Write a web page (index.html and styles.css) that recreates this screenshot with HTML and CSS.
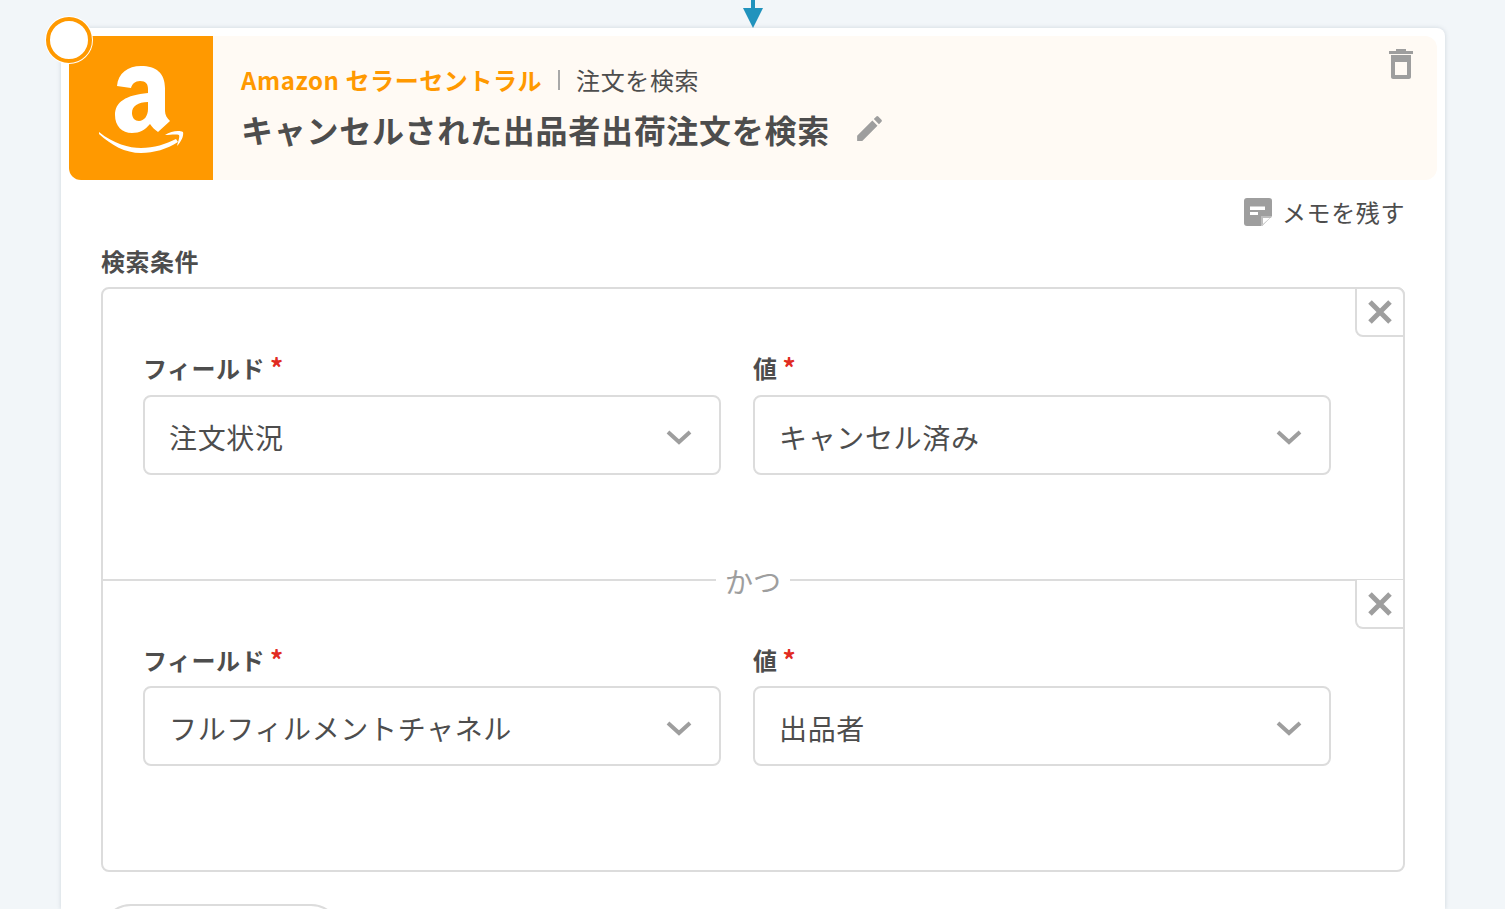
FILE: index.html
```html
<!DOCTYPE html>
<html lang="ja">
<head>
<meta charset="utf-8">
<title>キャンセルされた出品者出荷注文を検索</title>
<link rel="stylesheet" href="styles.css">
</head>
<body>
<div class="page">
  <svg class="arrow" width="22" height="30" viewBox="0 0 22 30"><rect x="9" y="0" width="4" height="12" fill="#2193bd"/><path d="M1 8H21L11 28Z" fill="#2193bd"/></svg>
  <section class="card">
    <div class="status"><span class="status-ring"></span></div>
    <header class="head">
      <div class="logo">
        <svg width="144" height="144" viewBox="0 0 144 144">
          <path fill="#fff" fill-rule="evenodd" d="M48 50C49 37 59 30 72 30C87 30 96 37 96 52V75C96 79 98 82 101 85L89 96C86 94 83 91 81 88C76 94 71 97 63 97C53 97 46 90 46 79C46 66 57 59 79 57V53C79 48 77 45 71 45C66 45 63 48 62 52ZM79 66C69 66 63 70 63 77C63 82 66 85 70 85C75 85 79 80 79 73Z"/>
          <path fill="#fff" d="M30 96C45 108 60 112 72 112C85 112 97 108 107 103L109 106C98 113 85 117 72 117C56 117 42 109 30 98Z"/>
          <path fill="#fff" d="M96 99C102 95 110 94 114 96C115 100 112 106 108 110C109 106 111 101 110 99C107 98 101 99 96 99Z"/>
        </svg>
      </div>
      <div class="head-text">
        <div class="crumbs"><span class="service">Amazon セラーセントラル</span><span class="sep"></span><span class="action">注文を検索</span></div>
        <div class="title-row">
          <h1 class="title">キャンセルされた出品者出荷注文を検索</h1>
          <svg class="pencil" width="33" height="33" viewBox="0 0 24 24"><path fill="#9e9e9e" d="M3 17.25V21h3.75L17.81 9.94l-3.75-3.75L3 17.25zM20.71 7.04a1 1 0 0 0 0-1.41l-2.34-2.34a1 1 0 0 0-1.41 0l-1.83 1.83 3.75 3.75 1.83-1.83z"/></svg>
        </div>
      </div>
      <svg class="trash" width="24" height="30" viewBox="0 0 24 30"><path fill="#9e9e9e" d="M0 2H24V5H0ZM7 0H17V3H7Z"/><path fill="#9e9e9e" fill-rule="evenodd" d="M2 6H22V28C22 29 21 30 20 30H4C3 30 2 29 2 28ZM6 13V26H18V13Z"/></svg>
    </header>
    <div class="body">
      <div class="memo">
        <svg width="28" height="28" viewBox="0 0 28 28"><path fill="#9e9e9e" d="M3 0H25C27 0 28 1 28 3V18L18 28H3C1 28 0 27 0 25V3C0 1 1 0 3 0Z"/><path fill="#fff" d="M6 8.500H21V12H6ZM6 14H14V17H6ZM17 28V18H28Z"/><path fill="#bdbdbd" d="M17 18H28L27 20H19V26L17 28Z"/></svg>
        <span class="memo-text">メモを残す</span>
      </div>
      <div class="section-label">検索条件</div>
      <div class="conditions">
        <div class="condition">
          <button class="remove" type="button" aria-label="削除"><svg width="26" height="26" viewBox="0 0 26 26"><path d="M3 3L23 23M23 3L3 23" stroke="#9e9e9e" stroke-width="5" fill="none"/></svg></button>
          <div class="fields">
            <div class="field"><div class="field-label">フィールド<span class="req">*</span></div><div class="select"><span>注文状況</span><svg class="chev" width="26" height="16" viewBox="0 0 26 16"><path d="M2 3L13 13L24 3" stroke="#9e9e9e" stroke-width="4" fill="none"/></svg></div></div>
            <div class="field"><div class="field-label">値<span class="req">*</span></div><div class="select"><span>キャンセル済み</span><svg class="chev" width="26" height="16" viewBox="0 0 26 16"><path d="M2 3L13 13L24 3" stroke="#9e9e9e" stroke-width="4" fill="none"/></svg></div></div>
          </div>
        </div>
        <div class="divider"><span class="divider-text">かつ</span></div>
        <div class="condition">
          <button class="remove" type="button" aria-label="削除"><svg width="26" height="26" viewBox="0 0 26 26"><path d="M3 3L23 23M23 3L3 23" stroke="#9e9e9e" stroke-width="5" fill="none"/></svg></button>
          <div class="fields">
            <div class="field"><div class="field-label">フィールド<span class="req">*</span></div><div class="select"><span>フルフィルメントチャネル</span><svg class="chev" width="26" height="16" viewBox="0 0 26 16"><path d="M2 3L13 13L24 3" stroke="#9e9e9e" stroke-width="4" fill="none"/></svg></div></div>
            <div class="field"><div class="field-label">値<span class="req">*</span></div><div class="select"><span>出品者</span><svg class="chev" width="26" height="16" viewBox="0 0 26 16"><path d="M2 3L13 13L24 3" stroke="#9e9e9e" stroke-width="4" fill="none"/></svg></div></div>
          </div>
        </div>
      </div>
      <div class="add-btn"></div>
    </div>
  </section>
</div>
</body>
</html>
```
FILE: styles.css
```css
* { box-sizing: border-box; }
html, body { margin: 0; height: 909px; overflow: hidden; }
body {
  background: #f2f6f9;
  color: #4d4d4d;
  font-family: "Noto Sans CJK JP", "Noto Sans", sans-serif;
}
.page { position: relative; height: 909px; overflow: hidden; padding: 28px 60px 0 61px; }
.arrow { position: absolute; left: 742px; top: 0; }
.card {
  position: relative;
  background: #fff;
  border-radius: 8px 8px 0 0;
  box-shadow: 0 0 4px rgba(100, 120, 140, .25);
  padding: 8px 8px 0;
  height: 881px;
  overflow: visible;
}
.status {
  position: absolute; z-index: 2; left: -16px; top: -12px;
  width: 48px; height: 48px; border-radius: 50%;
  background: #fff; padding: 1px;
}
.status-ring { display: block; width: 46px; height: 46px; border-radius: 50%; border: 4px solid #ff9900; }
.head {
  position: relative;
  display: flex; height: 144px;
  background: #fffaf4; border-radius: 12px;
  overflow: hidden;
}
.logo { flex: none; width: 144px; height: 144px; background: #ff9900; }
.logo svg { display: block; }
.head-text { padding: 25px 0 0 28px; }
.crumbs { display: flex; align-items: center; height: 38px; }
.service { color: #ff9900; font-size: 24px; font-weight: 700; letter-spacing: .57px; line-height: 38px; }
.sep { width: 2px; height: 20px; background: #a8a8a8; margin: 0 16px; }
.action { font-size: 24px; letter-spacing: .6px; line-height: 38px; }
.title-row { display: flex; align-items: center; margin-top: 6px; height: 48px; }
.title { margin: 0; font-size: 32px; font-weight: 700; letter-spacing: .72px; line-height: 48px; }
.pencil { margin: -2px 0 0 23px; }
.trash { position: absolute; right: 24px; top: 13px; }
.body { padding: 0 32px; }
.memo { display: flex; justify-content: flex-end; align-items: center; gap: 10px; height: 28px; margin-top: 18px; }
.memo-text { font-size: 24px; letter-spacing: .6px; line-height: 28px; }
.section-label { margin-top: 17px; font-size: 24px; font-weight: 700; letter-spacing: .5px; line-height: 36px; height: 36px; }
.conditions { border: 2px solid #dcdcdc; border-radius: 8px; margin-top: 8px; height: 585px; }
.condition { position: relative; height: 290px; padding: 61px 72px 0 40px; }
.remove {
  position: absolute; right: -2px; top: -2px;
  display: flex; align-items: center; justify-content: center;
  width: 50px; height: 50px; padding: 0;
  background: #fff; border: 2px solid #dcdcdc; border-radius: 0 8px 0 8px;
}
.divider + .condition .remove { top: -1px; border-radius: 0 0 0 8px; border-top: 0; height: 49px; }
.fields { display: grid; grid-template-columns: 1fr 1fr; gap: 32px; }
.field-label { font-size: 24px; font-weight: 700; letter-spacing: .5px; line-height: 36px; height: 36px; }
.req { color: #e12b22; margin-left: 5px; font-size: 26px; line-height: 0; }
.select {
  display: flex; align-items: center; justify-content: space-between;
  height: 80px; margin-top: 8px; padding: 4px 27px 0 24px;
  border: 2px solid #dcdcdc; border-radius: 8px;
  font-size: 28px; letter-spacing: .65px;
}
.condition:first-child .select { margin-top: 9px; }
.divider { position: relative; height: 2px; background: #dcdcdc; display: flex; justify-content: center; }
.divider-text { position: absolute; top: -18px; height: 40px; background: #fff; padding: 0 9px; color: #9e9e9e; font-size: 28px; line-height: 40px; }
.add-btn { width: 240px; height: 60px; margin-top: 32px; border: 2px solid #dcdcdc; border-radius: 30px; }
```
